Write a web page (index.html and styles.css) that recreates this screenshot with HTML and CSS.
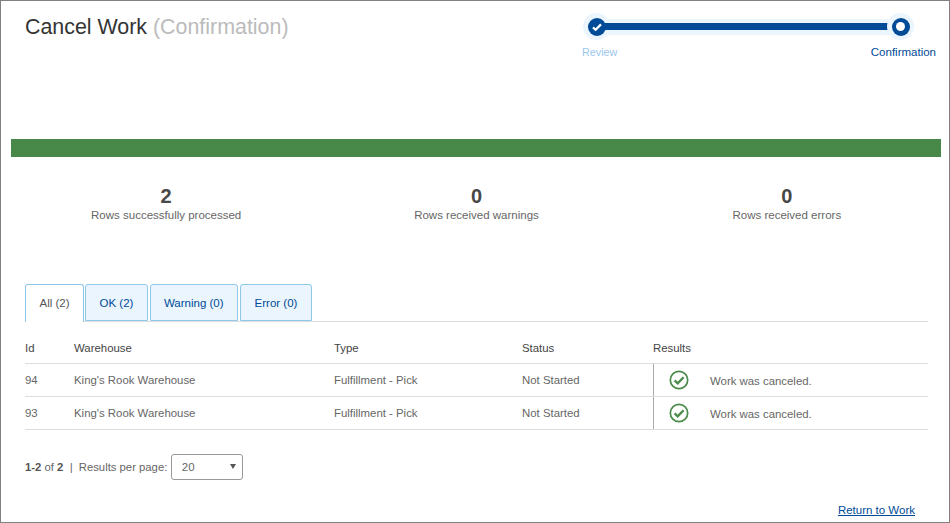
FILE: index.html
```html
<!DOCTYPE html>
<html lang="en">
<head>
<meta charset="utf-8">
<title>Cancel Work</title>
<link rel="stylesheet" href="styles.css">
</head>
<body>
<div class="frame">
  <header class="header">
    <h1 class="title">Cancel Work <span class="title-sub">(Confirmation)</span></h1>
    <div class="stepper">
      <div class="track">
        <div class="halo">
          <span class="node">
            <svg class="node-check" viewBox="0 0 10 8" width="10" height="8"><path d="M1 4.4 3.6 6.8 9 1.4" fill="none" stroke="#fff" stroke-width="2.2"/></svg>
          </span>
        </div>
        <div class="line"></div>
        <div class="halo">
          <span class="node node-current"></span>
        </div>
      </div>
      <div class="step-labels">
        <span class="step-done">Review</span>
        <span class="step-now">Confirmation</span>
      </div>
    </div>
  </header>
  <div class="progress"></div>
  <section class="stats">
    <div class="stat"><div class="stat-num">2</div><div class="stat-label">Rows successfully processed</div></div>
    <div class="stat"><div class="stat-num">0</div><div class="stat-label">Rows received warnings</div></div>
    <div class="stat"><div class="stat-num">0</div><div class="stat-label">Rows received errors</div></div>
  </section>
  <main class="content">
    <nav class="tabs">
      <a class="tab tab-active">All (2)</a>
      <a class="tab">OK (2)</a>
      <a class="tab">Warning (0)</a>
      <a class="tab">Error (0)</a>
    </nav>
    <table class="grid">
      <colgroup>
        <col class="c-id"><col class="c-wh"><col class="c-type"><col class="c-status"><col class="c-icon"><col>
      </colgroup>
      <thead>
        <tr><th>Id</th><th>Warehouse</th><th>Type</th><th>Status</th><th colspan="2">Results</th></tr>
      </thead>
      <tbody>
        <tr>
          <td>94</td><td>King's Rook Warehouse</td><td>Fulfillment - Pick</td><td>Not Started</td>
          <td class="cell-icon"><svg class="ok" viewBox="0 0 20 20" width="20" height="20"><circle cx="10" cy="10" r="8.7" fill="none" stroke="#4a8a4a" stroke-width="1.7"/><path d="M5.6 10.3 8.7 13.3 14.6 7.2" fill="none" stroke="#4a8a4a" stroke-width="2.3"/></svg></td>
          <td class="cell-msg">Work was canceled.</td>
        </tr>
        <tr>
          <td>93</td><td>King's Rook Warehouse</td><td>Fulfillment - Pick</td><td>Not Started</td>
          <td class="cell-icon"><svg class="ok" viewBox="0 0 20 20" width="20" height="20"><circle cx="10" cy="10" r="8.7" fill="none" stroke="#4a8a4a" stroke-width="1.7"/><path d="M5.6 10.3 8.7 13.3 14.6 7.2" fill="none" stroke="#4a8a4a" stroke-width="2.3"/></svg></td>
          <td class="cell-msg">Work was canceled.</td>
        </tr>
      </tbody>
    </table>
    <div class="pager">
      <span class="pager-text"><b>1-2</b> of <b>2</b><span class="pager-sep">|</span>Results per page:</span>
      <div class="select"><span>20</span><i class="caret"></i></div>
    </div>
    <div class="return"><a href="#" class="return-link">Return to Work</a></div>
  </main>
</div>
</body>
</html>
```
FILE: styles.css
```css
* { box-sizing: border-box; }
html, body { margin: 0; padding: 0; background: #fff; }
body { font-family: "Liberation Sans", Arial, sans-serif; color: #555; overflow: hidden; }
.frame { width: 950px; height: 523px; border: 1px solid #808080; overflow: hidden; }

.header { height: 138px; display: flex; justify-content: space-between; padding: 13px 12px 0 24px; }
.title { margin: 0; font-size: 21.4px; line-height: 26px; font-weight: 400; color: #333; }
.title-sub { color: #bbb; }

.stepper { width: 355px; margin-top: -1px; }
.track { display: flex; align-items: center; height: 27px; margin-left: 1px; width: 331px; }
.halo { width: 27px; height: 27px; border-radius: 50%; background: #eaf5fe; display: flex; align-items: center; justify-content: center; flex: none; }
.line { flex: 1; height: 16px; margin: 0 -6px; background: #eaf5fe; display: flex; align-items: center; }
.line::before { content: ""; display: block; width: 100%; height: 7px; background: #004b97; }
.node { width: 18px; height: 18px; border-radius: 50%; background: #004b97; display: flex; align-items: center; justify-content: center; position: relative; z-index: 1; }
.node-current::before { content: ""; width: 9px; height: 9px; border-radius: 50%; background: #fff; }
.step-labels { display: flex; justify-content: space-between; font-size: 10.8px; line-height: 14px; margin-top: 5px; padding-right: 1px; }
.step-done { color: #9cc6ec; }
.step-now { color: #004b97; font-size: 11.5px; }

.progress { height: 18px; margin: 0 8px 0 10px; background: #488848; }

.stats { display: flex; margin: 27px 7px 0 10px; }
.stat { flex: 1; text-align: center; }
.stat-num { font-size: 20px; font-weight: 700; line-height: 24px; color: #484848; }
.stat-label { font-size: 11.5px; line-height: 14px; color: #666; }

.content { padding: 0 21px 0 24px; }
.tabs { display: flex; gap: 2px; margin-top: 62px; height: 38px; border-bottom: 1px solid #ddd; }
.tab { height: 37px; padding: 0 14px; font-size: 11.5px; line-height: 37px; color: #004b97; background: #eaf5fe; border: 1px solid #90c8ec; border-radius: 3px 3px 0 0; }
.tab:first-child { margin-right: -1px; padding: 0 13.5px; }
.tab:nth-child(2) { padding: 0 13.5px; }
.tab:nth-child(3) { padding: 0 13px; }
.tab-active { color: #555; background: #fff; height: 38px; border-bottom: 0; }

.grid { width: 903px; table-layout: fixed; border-collapse: collapse; font-size: 11.4px; }
.c-id { width: 49px; } .c-wh { width: 260px; } .c-type { width: 188px; } .c-status { width: 131px; } .c-icon { width: 57px; }
.grid th { height: 41px; padding: 12px 0 0; text-align: left; font-weight: 400; color: #444; border-bottom: 1px solid #ddd; }
.grid td { height: 33px; padding: 1px 0 0; border-bottom: 1px solid #ddd; color: #666; }
.grid .cell-icon { border-left: 1px solid #aaa; text-align: left; padding: 0 0 0 15px; }
.grid .cell-msg { padding-top: 3px; }
.ok { display: block; }

.pager { display: flex; align-items: center; margin-top: 24px; height: 26px; font-size: 11.3px; color: #666; }
.pager b { color: #555; }
.pager-sep { margin: 0 6px 0 6.5px; }
.pager-text { margin-right: 4px; }
.select { width: 72px; height: 26px; border: 1px solid #999; border-radius: 3px; padding: 0 6px 0 9.5px; display: flex; align-items: center; justify-content: space-between; background: #fff; font-size: 11.5px; }
.caret { width: 0; height: 0; border-left: 3px solid transparent; border-right: 3px solid transparent; border-top: 5px solid #555; }

.return { margin-top: 23px; padding-right: 13px; text-align: right; font-size: 11.5px; line-height: 14px; }
.return-link { color: #004b97; }
```
